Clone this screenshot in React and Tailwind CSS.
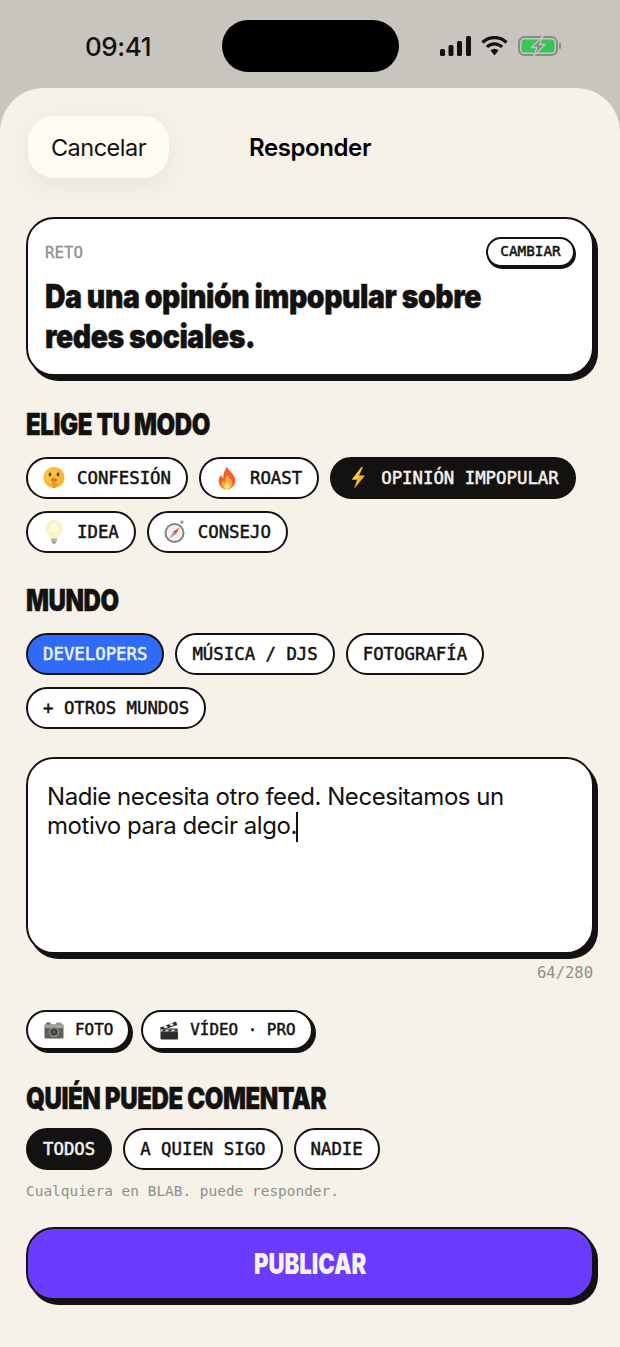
const head = "font-['Inter','Liberation_Sans',sans-serif]";
const mono = "font-['DejaVu_Sans_Mono','Liberation_Mono',monospace]";
const monoStroke = "font-normal [-webkit-text-stroke:0.5px_currentColor]";

function Shush() {
  return (
    <svg width="22" height="24" viewBox="0 0 22 24">
      <circle cx="11" cy="11.500" r="10.500" fill="#f8b636" />
      <circle cx="9" cy="10" r="7" fill="#fcc84f" opacity=".6" />
      <ellipse cx="7" cy="8.500" rx="1.300" ry="1.900" fill="#5b3a1a" />
      <ellipse cx="15" cy="8.500" rx="1.300" ry="1.900" fill="#5b3a1a" />
      <ellipse cx="11" cy="14" rx="3" ry="1.300" fill="#a34a1a" />
      <rect x="9.500" y="11" width="3" height="11" rx="1.500" fill="#e98a22" />
      <path d="M9 17c-.3 2.500.8 4.500 2.500 4.500s3-1.500 3-3.800l-2.500-1.500z" fill="#ee9a2c" />
    </svg>
  );
}
function Fire() {
  return (
    <svg width="22" height="24" viewBox="0 0 20 22">
      <path d="M10 0.500c1 4 6.500 6 7.500 11.500 .7 5-3 9.500-7.500 9.500S1.800 17.500 2.500 12.500c.3-2 1.300-3.500 2.300-4.500 0 1.500.7 2.500 1.700 3C6.500 7 8 4 10 .5z" fill="#f0612a" />
      <path d="M10.500 8c.8 2.500 4.500 4.500 4.500 8.500 0 2.800-2.300 5-5 5s-5-2.200-5-5c0-1.500.7-2.500 1.500-3.200.2 1 .7 1.500 1.300 1.700 0-2.800 1.300-4.800 2.700-7z" fill="#fba83a" />
      <path d="M10 14c.5 1.500 2.500 2.500 2.500 4.500 0 1.700-1.200 3-2.500 3s-2.500-1.300-2.500-3c0-2 2-3 2.500-4.500z" fill="#fde27a" />
    </svg>
  );
}
function Bolt() {
  return (
    <svg width="22" height="24" viewBox="0 0 22 24">
      <path d="M14.500 1 5 13.500h5.500L7 23 18 9.500h-6L16 1z" fill="#f8b22f" />
      <path d="M7 23 10.500 13.500H5L14.500 1 11 10.500z" fill="#fbc845" />
    </svg>
  );
}
function Bulb() {
  return (
    <svg width="22" height="26" viewBox="0 0 22 26">
      <path d="M11 1.500a8 8 0 0 0-5 14.200c1.200 1 1.900 2.200 2 3.800h6c.1-1.600.8-2.800 2-3.800A8 8 0 0 0 11 1.500z" fill="#fdf3c0" stroke="#f3e6a8" strokeWidth=".6" />
      <circle cx="11" cy="8.500" r="4.500" fill="#fffbe6" />
      <rect x="8" y="19.500" width="6" height="3.500" rx="1" fill="#b4b4ae" />
      <rect x="9.300" y="23" width="3.400" height="1.500" rx=".7" fill="#77776f" />
    </svg>
  );
}
function Compass() {
  return (
    <svg width="22" height="24" viewBox="0 0 22 24">
      <rect x="16.500" y="0.500" width="3" height="3.500" rx="1" fill="#a5a5a5" transform="rotate(40 18 2)" />
      <circle cx="10.500" cy="13" r="10" fill="#7f8185" />
      <circle cx="10.500" cy="13" r="8" fill="#f2f1ed" />
      <path d="M15.500 7.500 11.800 14.300 9.200 11.800z" fill="#e2453a" />
      <path d="M5.500 18.500 9.200 11.800 11.800 14.300z" fill="#a5a5a5" />
    </svg>
  );
}
function Camera() {
  return (
    <svg width="20" height="17" viewBox="0 0 20 17">
      <rect x="2" y="0.500" width="4.500" height="2.500" fill="#666" />
      <rect x="12" y="0.500" width="5.500" height="2.500" fill="#999" />
      <rect x="0.500" y="2.500" width="19" height="14" rx="1.200" fill="#5f5f5d" />
      <rect x="0.500" y="2.500" width="19" height="3.500" fill="#a3a3a0" />
      <circle cx="10" cy="10" r="5.200" fill="#8a8a88" />
      <circle cx="10" cy="10" r="3.600" fill="#3d3d3b" />
      <circle cx="10" cy="10" r="1.800" fill="#6b5a4a" />
    </svg>
  );
}
function Clapper() {
  return (
    <svg width="20" height="20" viewBox="0 0 20 20">
      <rect x="1.500" y="8.500" width="17.500" height="11" rx="1" fill="#2c2c2c" />
      <path d="M1 7.500 17 1.500l1.300 3.500L2.300 10.500z" fill="#2c2c2c" />
      <path d="M4 6.500 7 5.300l2 2L6 8.500zM10 4.200l3-1.100 2 2-3 1.100z" fill="#eee" />
      <path d="M1.500 9.500h17.500v2H1.500z" fill="#d8d8d8" />
      <path d="M4 9.500h3l-1 2H3zM10 9.500h3l-1 2H9zM16 9.500h3l-1 2h-3z" fill="#333" />
    </svg>
  );
}

function Chip({ icon, children, variant = "plain", small = false }) {
  const tone =
    variant === "dark"
      ? "bg-[#141210] text-[#f6f2ea] border-[#141210]"
      : variant === "blue"
      ? "bg-[#2f6bf6] text-[#eef3ff] border-[#141210]"
      : "bg-white text-[#141210] border-[#141210]";
  const size = small
    ? "h-[40px] gap-[10px] text-[15.9px] shadow-[3px_3px_0_#141210]"
    : "h-[42px] gap-[12px] text-[17.35px]";
  return (
    <div className={`flex items-center rounded-full border-2 px-[15px] whitespace-nowrap ${mono} ${monoStroke} ${tone} ${size}`}>
      {icon && <span className="flex w-[22px] shrink-0 items-center justify-center">{icon}</span>}
      <span>{children}</span>
    </div>
  );
}

function Title({ children }) {
  return (
    <h2 className={`w-max origin-left scale-x-[0.815] text-[29.5px] leading-[36px] font-black tracking-[-0.5px] text-[#141210] whitespace-nowrap [-webkit-text-stroke:0.4px_#141210] ${head}`}>
      {children}
    </h2>
  );
}

export default function App() {
  return (
    <div className="flex h-[1347px] w-[620px] flex-col overflow-hidden bg-[#c8c5be] font-['Inter',sans-serif]">
      <div className="flex h-[88px] shrink-0 items-start justify-between pt-[20px]">
        <div className="flex h-[52px] w-[222px] items-center justify-center text-[26px] font-medium tracking-[-0.4px] text-[#141210]">
          <span className="ml-[14px]">09:41</span>
        </div>
        <div className="h-[52px] w-[177px] rounded-full bg-black" />
        <div className="flex h-[52px] w-[221px] items-center gap-[10px] pl-[41px]">
          <svg width="31" height="20" viewBox="0 0 31 20">
            <rect x="0" y="13" width="5" height="7" rx="1.500" fill="#111" />
            <rect x="8.500" y="9" width="5" height="11" rx="1.500" fill="#111" />
            <rect x="17" y="5" width="5" height="15" rx="1.500" fill="#111" />
            <rect x="26" y="0" width="5" height="20" rx="1.500" fill="#111" />
          </svg>
          <svg width="27" height="20" viewBox="0 0 27 20">
            <path d="M1.500 6.500a17 17 0 0 1 24 0" fill="none" stroke="#111" strokeWidth="3.200" />
            <path d="M6 11a10.500 10.500 0 0 1 15 0" fill="none" stroke="#111" strokeWidth="3.200" />
            <path d="M9.500 14.500a5.500 5.500 0 0 1 8 0L13.500 19.500z" fill="#111" />
          </svg>
          <svg width="44" height="20" viewBox="0 0 44 20">
            <rect x="1" y="1" width="38" height="18" rx="5.500" fill="none" stroke="#8a8a86" strokeWidth="2" />
            <rect x="3.500" y="3.500" width="33" height="13" rx="3.500" fill="#35c65c" />
            <rect x="41" y="7" width="2" height="6" rx="1" fill="#8a8a86" />
            <path d="M25 0 13.500 11.500h5.500L15.500 20 27 8.500h-5.500z" fill="#8a8a86" stroke="#c8c5be" strokeWidth="1.300" />
          </svg>
        </div>
      </div>

      <div className="flex flex-1 flex-col rounded-t-[44px] bg-[#f6f2ea] px-[26px]">
        <div className="relative mt-[28px] flex h-[62px] items-center justify-center">
          <div className="absolute top-0 left-[2px] flex h-[62px] w-[141px] items-center justify-center rounded-[26px] bg-[#fffbf3] pt-[1px] text-[23.5px] tracking-[-0.5px] text-[#141210] shadow-[0_8px_28px_rgba(60,50,30,0.07)]">
            Cancelar
          </div>
          <span className="pt-[1px] text-[24px] font-semibold tracking-[-0.4px] text-black">Responder</span>
        </div>

        <div className="mt-[39px] h-[159px] rounded-[28px] border-2 border-[#141210] bg-white pt-[18px] pr-[17px] pl-[17px] shadow-[4px_5px_0_#141210]">
          <div className="flex items-start justify-between">
            <span className={`mt-[6px] text-[15.8px] leading-[20px] text-[#8f8f8a] ${mono} font-normal [-webkit-text-stroke:0.3px_currentColor]`}>RETO</span>
            <div className={`flex h-[30px] w-[89px] items-center justify-center rounded-full border-2 border-[#141210] bg-white text-[14.3px] text-[#141210] shadow-[1px_2px_0_#141210] ${mono} ${monoStroke}`}>
              CAMBIAR
            </div>
          </div>
          <p className={`mt-[10px] w-max origin-left scale-x-[0.875] text-[32.5px] leading-[40px] font-black tracking-[-0.5px] whitespace-nowrap text-[#141210] [-webkit-text-stroke:0.4px_#141210] ${head}`}>
            Da una opinión impopular sobre<br />redes sociales.
          </p>
        </div>

        <div className="mt-[30px]"><Title>ELIGE TU MODO</Title></div>
        <div className="mt-[15px] flex flex-wrap gap-x-[11px] gap-y-[12px]">
          <Chip icon={<Shush />}>CONFESIÓN</Chip>
          <Chip icon={<Fire />}>ROAST</Chip>
          <Chip icon={<Bolt />} variant="dark">OPINIÓN IMPOPULAR</Chip>
          <Chip icon={<Bulb />}>IDEA</Chip>
          <Chip icon={<Compass />}>CONSEJO</Chip>
        </div>

        <div className="mt-[29px]"><Title>MUNDO</Title></div>
        <div className="mt-[15px] flex flex-wrap gap-x-[11px] gap-y-[12px]">
          <Chip variant="blue">DEVELOPERS</Chip>
          <Chip>MÚSICA / DJS</Chip>
          <Chip>FOTOGRAFÍA</Chip>
          <Chip>+ OTROS MUNDOS</Chip>
        </div>

        <div className="mt-[28px] h-[197px] rounded-[28px] border-2 border-[#141210] bg-white px-[19px] pt-[23px] text-[24px] leading-[29px] tracking-[-0.45px] text-[#141210] shadow-[4px_5px_0_#141210]">
          Nadie necesita otro feed. Necesitamos un<br />motivo para decir algo.<span className="ml-[-1px] inline-block h-[30px] w-[2px] bg-[#141210] align-middle" />
        </div>
        <div className={`mt-[9px] pr-[1px] text-right text-[15.5px] leading-[20px] text-[#8f8f8a] ${mono}`}>64/280</div>

        <div className="mt-[27px] flex gap-[11px]">
          <Chip icon={<Camera />} small>FOTO</Chip>
          <Chip icon={<Clapper />} small>VÍDEO · PRO</Chip>
        </div>

        <div className="mt-[30px]"><Title>QUIÉN PUEDE COMENTAR</Title></div>
        <div className="mt-[12px] flex gap-[11px]">
          <Chip variant="dark">TODOS</Chip>
          <Chip>A QUIEN SIGO</Chip>
          <Chip>NADIE</Chip>
        </div>
        <p className={`mt-[11px] text-[14.45px] leading-[20px] text-[#8f8f8a] ${mono}`}>Cualquiera en BLAB. puede responder.</p>

        <div className="mt-[26px] flex h-[73px] items-center justify-center rounded-[28px] border-2 border-[#141210] bg-[#6b3cff] text-[#f6f2ea] shadow-[4px_5px_0_#141210]">
          <span className={`scale-x-[0.79] text-[28px] font-black ${head}`}>PUBLICAR</span>
        </div>
      </div>
    </div>
  );
}
